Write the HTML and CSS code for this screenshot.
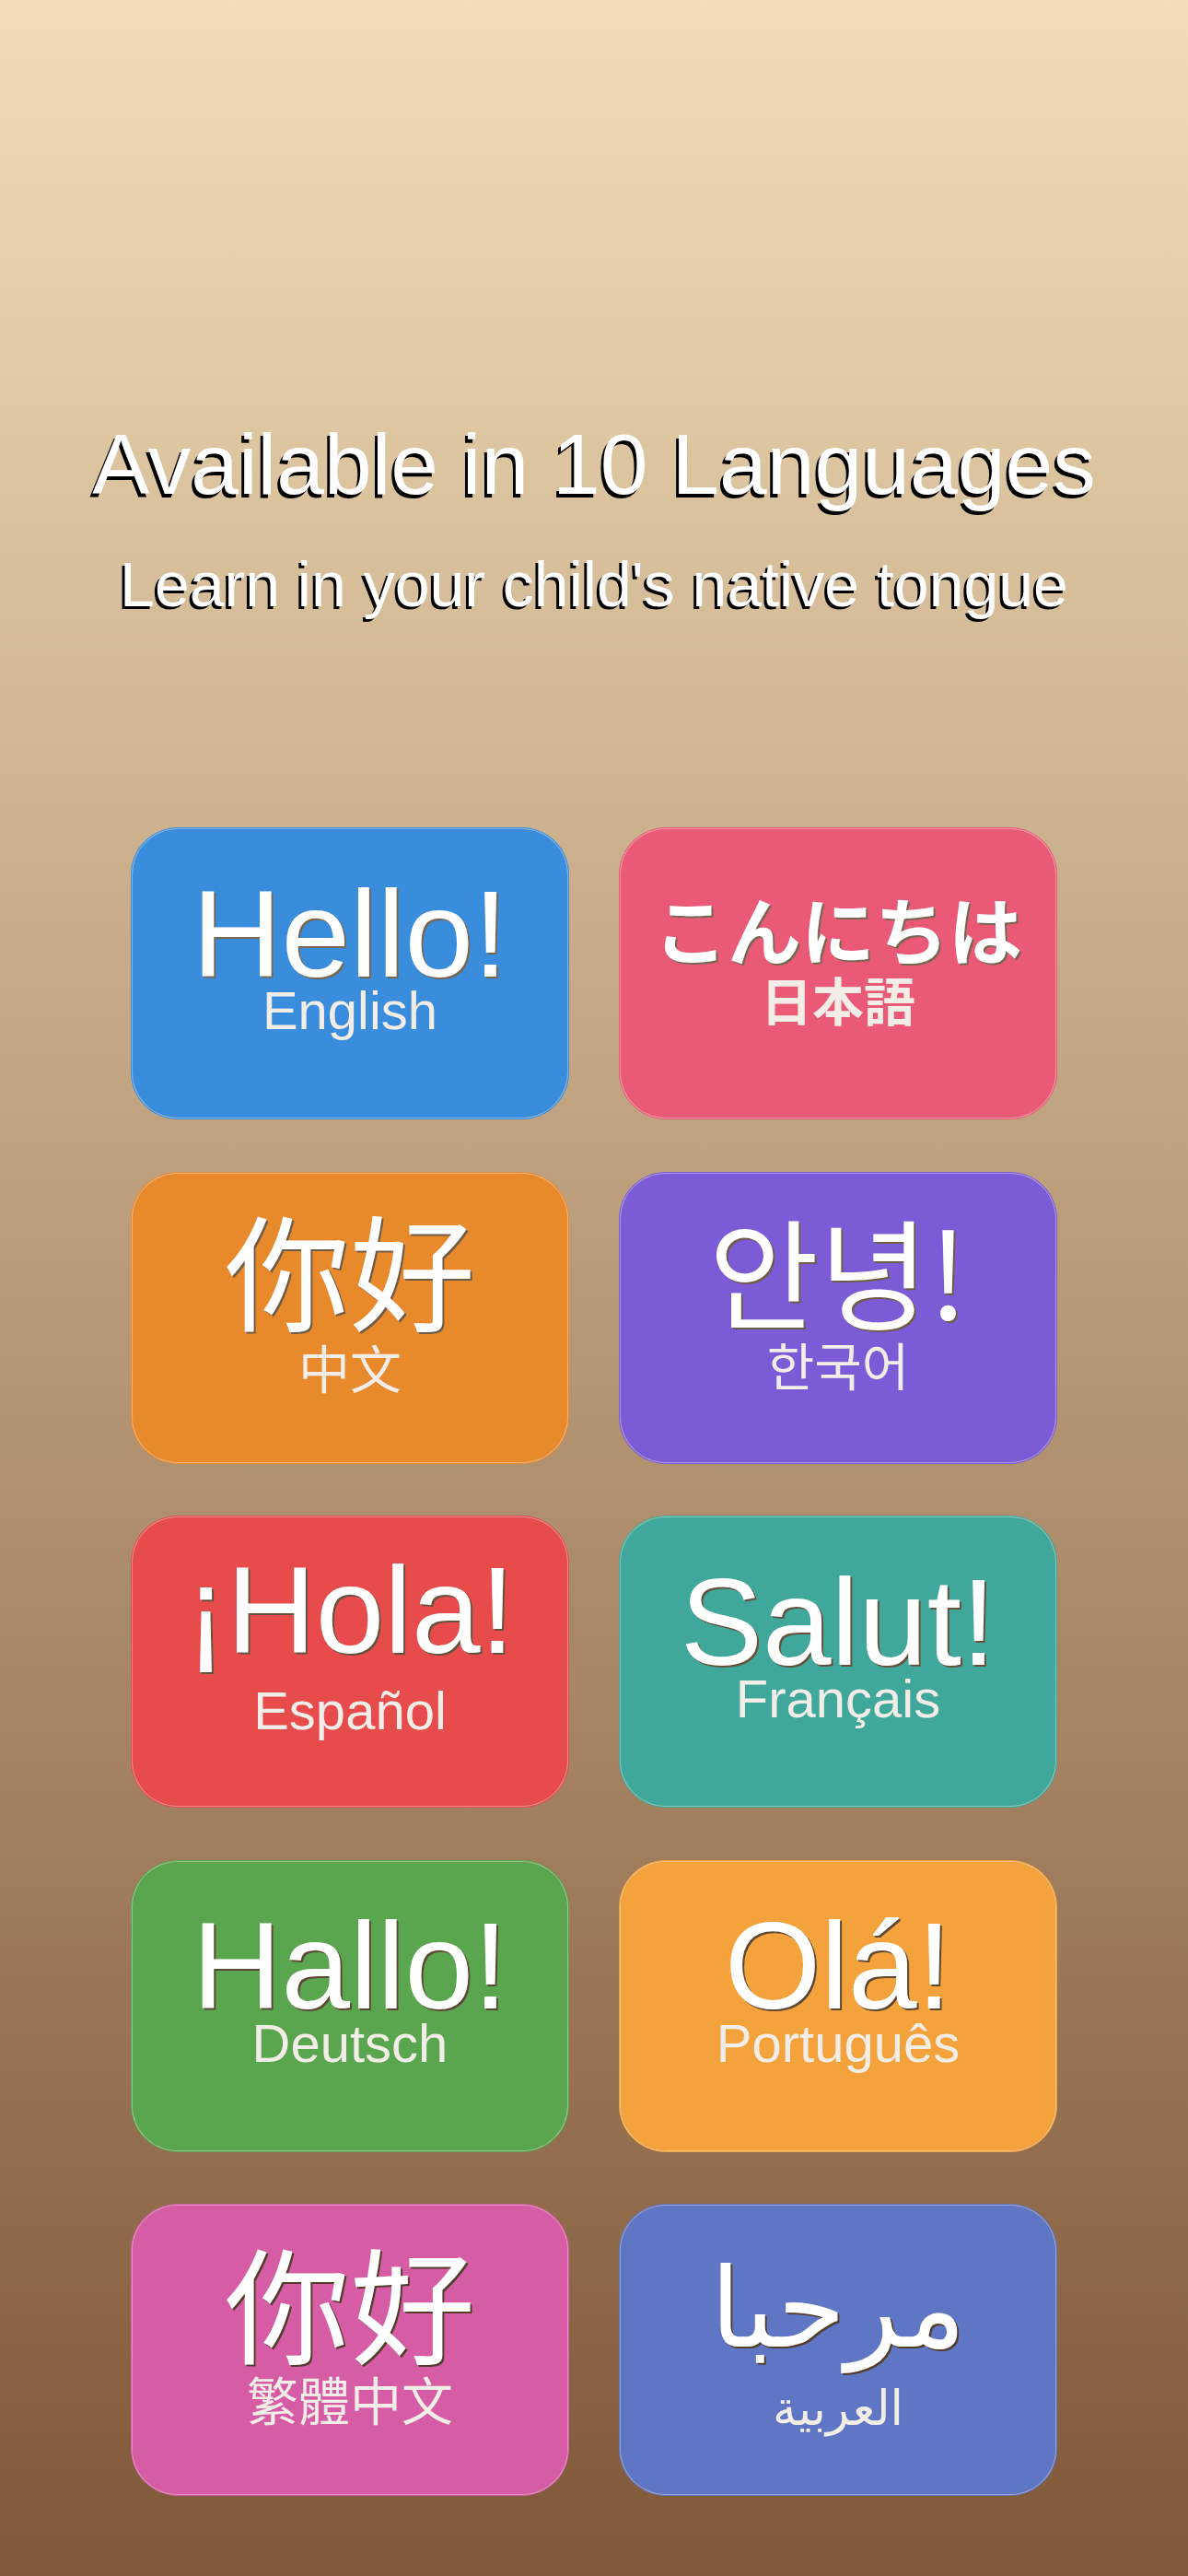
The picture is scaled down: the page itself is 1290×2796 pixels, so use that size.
FILE: index.html
```html
<!DOCTYPE html>
<html lang="en">
<head>
  <meta charset="UTF-8">
  <meta name="viewport" content="width=device-width, initial-scale=1.0">
  <title>Available in 10 Languages</title>
  <link rel="stylesheet" href="styles.css">
</head>
<body>
  <div class="page">
    <header class="hero">
      <h1>Available in 10 Languages</h1>
      <p>Learn in your child's native tongue</p>
    </header>

    <div class="languages">
      <div class="card card-en">
        <div class="greeting">Hello!</div>
        <div class="name">English</div>
      </div>
      <div class="card card-ja" lang="ja">
        <div class="greeting">こんにちは</div>
        <div class="name">日本語</div>
      </div>
      <div class="card card-zh" lang="zh-Hans">
        <div class="greeting">你好</div>
        <div class="name">中文</div>
      </div>
      <div class="card card-ko" lang="ko">
        <div class="greeting">안녕!</div>
        <div class="name">한국어</div>
      </div>
      <div class="card card-es" lang="es">
        <div class="greeting">¡Hola!</div>
        <div class="name">Español</div>
      </div>
      <div class="card card-fr" lang="fr">
        <div class="greeting">Salut!</div>
        <div class="name">Français</div>
      </div>
      <div class="card card-de" lang="de">
        <div class="greeting">Hallo!</div>
        <div class="name">Deutsch</div>
      </div>
      <div class="card card-pt" lang="pt">
        <div class="greeting">Olá!</div>
        <div class="name">Português</div>
      </div>
      <div class="card card-tw" lang="zh-Hant">
        <div class="greeting">你好</div>
        <div class="name">繁體中文</div>
      </div>
      <div class="card card-ar" lang="ar" dir="rtl">
        <div class="greeting">مرحبا</div>
        <div class="name">العربية</div>
      </div>
    </div>
  </div>
</body>
</html>
```

FILE: styles.css
```css
body {
  margin: 0;
  font-family: "Liberation Sans", Arial, "Noto Sans CJK SC", sans-serif;
  color: #fff;
}
.page {
  min-height: 100vh;
  background: linear-gradient(to bottom, #f1dcb6, #80583a);
  overflow: hidden;
}

/* header */
.hero {
  padding-top: 451px;
  text-align: center;
}
.hero h1 {
  margin: 0;
  font-size: 93px;
  font-weight: 400;
  line-height: 1.15;
  text-shadow: -3px 4px 0 #000;
}
.hero p {
  margin: 37px 0 0;
  font-size: 68px;
  line-height: 1.15;
  text-shadow: -3px 3px 0 #000;
}

/* language grid */
.languages {
  display: grid;
  grid-template-columns: repeat(2, 474px);
  justify-content: center;
  column-gap: 56px;
  row-gap: 58.5px;
  margin-top: 226px;
}
.card {
  --card: #3a8cdc;
  --shade: rgb(119, 103, 82);
  height: 315px;
  box-sizing: border-box;
  padding-bottom: 31px;
  border: 1px solid rgba(255, 255, 255, 0.35);
  border-radius: 50px;
  background-color: var(--card);
  background-clip: padding-box;
  box-shadow: 0 0 0 1px var(--card);
  display: flex;
  flex-direction: column;
  align-items: center;
  justify-content: center;
}
.greeting {
  font-size: 134px;
  line-height: 0.75;
  white-space: nowrap;
  text-shadow: 2px 2px 0 var(--shade);
}
.name {
  font-size: 58px;
  line-height: 0.75;
  margin-top: 11px;
  color: #f3ede8;
  white-space: nowrap;
}

/* shadow follows the page tone, row by row */
.card:nth-child(3), .card:nth-child(4) { --shade: rgb(110, 92, 71); }
.card:nth-child(5), .card:nth-child(6) { --shade: rgb(101, 82, 62); }
.card:nth-child(7), .card:nth-child(8) { --shade: rgb(92, 71, 52); }
.card:nth-child(9), .card:nth-child(10) { --shade: rgb(83, 61, 42); }

/* colours */
.card-en { --card: #3a8cdc; }
.card-ja { --card: #ea5975; }
.card-zh { --card: #e8892c; }
.card-ko { --card: #7b5cd6; }
.card-es { --card: #e74b4b; }
.card-fr { --card: #3fa89a; }
.card-de { --card: #5aa64e; }
.card-pt { --card: #f4a23c; }
.card-tw { --card: #d65ca6; }
.card-ar { --card: #5f76c4; }

/* per-script tweaks */
.card-es .name { margin-top: 36px; }

.card-ja {
  font-family: "Noto Sans CJK JP", sans-serif;
  padding-bottom: 34px;
}
.card-ja .greeting { font-size: 80px; font-weight: 700; line-height: 0.9; }
.card-ja .name { font-size: 56px; font-weight: 700; line-height: 0.9; margin-top: 17px; }

.card-zh { font-family: "Noto Sans CJK SC", sans-serif; }
.card-tw { font-family: "Noto Sans CJK TC", sans-serif; }
.card-ko { font-family: "Noto Sans CJK KR", sans-serif; }
.card-zh, .card-tw, .card-ko { padding-bottom: 37px; }
.card-zh .greeting, .card-tw .greeting { font-size: 136px; line-height: 0.9; }
.card-ko .greeting { font-size: 130px; line-height: 0.9; }
.card-zh .name, .card-tw .name, .card-ko .name {
  font-size: 56px;
  line-height: 0.9;
  margin-top: 20px;
}

.card-ar {
  font-family: "DejaVu Sans", sans-serif;
  padding-bottom: 15px;
}
.card-ar .greeting { font-size: 120px; line-height: 1; }
.card-ar .name { font-size: 52px; line-height: 1; margin-top: 22px; }
```
